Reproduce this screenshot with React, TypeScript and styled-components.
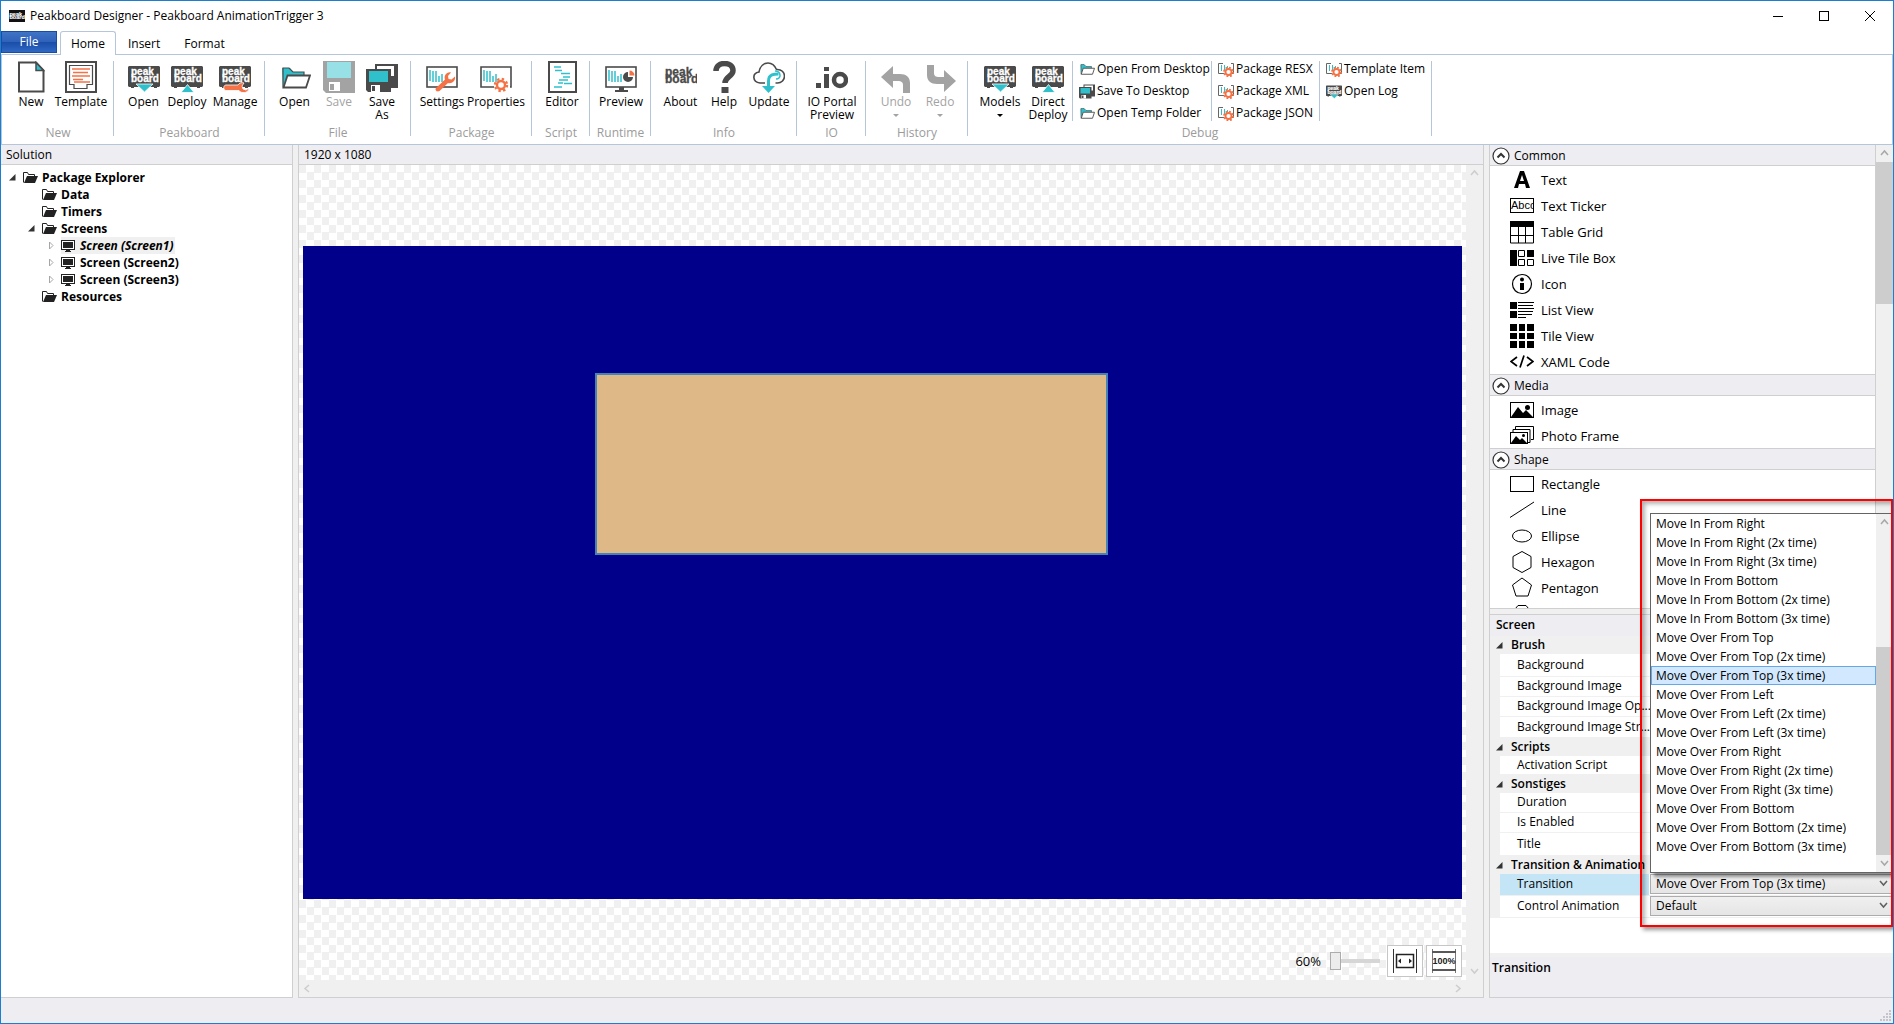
import React, { useState } from 'react';
import styled, { createGlobalStyle, css } from 'styled-components';

const c = {
  accent: '#1a7fd0',
  line: '#b6c6da',
  panel: '#eeedf2',
  grey: '#f0f0f0',
  border: '#cfcfcf',
  dark: '#4a4a4a',
  teal: '#30c0cc',
  orange: '#f47245',
  mute: '#a3a3a3',
};

const GlobalStyle = createGlobalStyle`
  * { box-sizing: border-box; }
  body { margin: 0; font-family: "Open Sans", "Noto Sans", sans-serif; font-size: 12px; line-height: 16px; color: #000; }
  button, select, input { font: inherit; color: inherit; }
  button { background: none; border: 0; padding: 0; }
  ul { list-style: none; margin: 0; padding: 0; }
  h1, h2, h3 { margin: 0; font: inherit; }
  svg { display: block; flex: none; }
`;

/* ---------- window frame ---------- */

const Window = styled.div`
  min-height: 100vh;
  display: flex;
  flex-direction: column;
  border: 1px solid ${c.accent};
  background: ${c.grey};
  overflow: hidden;
`;

const TitleBar = styled.header`
  display: flex;
  align-items: center;
  height: 30px;
  padding-left: 8px;
  background: #fff;
`;

const Title = styled.h1`
  flex: 1;
  margin-left: 5px;
  font-size: 12px;
`;

const WindowButton = styled.button`
  display: flex;
  align-items: center;
  justify-content: center;
  width: 46px;
  height: 28px;
`;

const TabStrip = styled.nav`
  display: flex;
  align-items: flex-end;
  height: 24px;
  background: #fff;
  border-bottom: 1px solid ${c.line};
`;

const FileTab = styled.button`
  width: 56px;
  height: 22px;
  margin: 0 3px 1px 0;
  color: #fff;
  border: 1px solid #1a4ba5;
  background: linear-gradient(#4074c6 0%, #2f62b9 48%, #1a4ea9 52%, #2f68c4 100%);
`;

const Tab = styled.button<{ $active?: boolean }>`
  height: 24px;
  padding: 0 11px;
  margin-bottom: -1px;
  border: 1px solid transparent;
  border-bottom: 0;
  ${(p) =>
    p.$active &&
    css`
      background: #fff;
      border-color: ${c.line};
      border-radius: 3px 3px 0 0;
      padding: 0 10px;
    `}
`;

/* ---------- ribbon ---------- */

const Ribbon = styled.div`
  display: flex;
  height: 90px;
  padding-top: 6px;
  background: #fff;
  border: 1px solid ${c.line};
  border-top: 0;
`;

const Group = styled.section<{ $w: number }>`
  display: flex;
  flex-direction: column;
  flex: none;
  width: ${(p) => p.$w}px;
  height: 79px;
  background: linear-gradient(${c.line}, ${c.line}) right top / 1px 75px no-repeat;
`;

const GroupItems = styled.div`
  display: flex;
  flex: 1;
  padding-left: 8px;
`;

const GroupName = styled.h2`
  height: 14px;
  line-height: 14px;
  text-align: center;
  color: #9b9b9b;
`;

const BigButton = styled.button<{ $w: number }>`
  display: flex;
  flex-direction: column;
  align-items: center;
  flex: none;
  width: ${(p) => p.$w}px;
  line-height: 13px;
  white-space: nowrap;
  &:disabled {
    color: ${c.mute};
  }
`;

const BigLabel = styled.span`
  margin-top: 2px;
  white-space: pre-line;
  text-align: center;
`;

const Caret = styled.span`
  margin-top: 6px;
  border: 3px solid transparent;
  border-top-color: currentColor;
  border-bottom: 0;
`;

const SmallColumn = styled.div<{ $w: number }>`
  width: ${(p) => p.$w}px;
  height: 60px;
  padding-left: 6px;
  border-left: 1px solid ${c.line};
`;

const SmallButton = styled.button`
  display: flex;
  align-items: center;
  gap: 2px;
  height: 22px;
  padding-bottom: 6px;
  white-space: nowrap;
`;

/* ---------- work area ---------- */

const Work = styled.main`
  display: flex;
  flex: 1;
  gap: 5px;
`;

const Panel = styled.section`
  display: flex;
  flex-direction: column;
  border-right: 1px solid ${c.border};
  border-bottom: 1px solid ${c.border};
`;

const SolutionPanel = styled(Panel)`
  width: 292px;
  background: #fff;
`;

const CanvasPanel = styled(Panel)`
  flex: 1;
  border-left: 1px solid ${c.border};
`;

const PanelHeader = styled.h2`
  height: 20px;
  padding-left: 5px;
  line-height: 20px;
  background: ${c.panel};
  border-bottom: 1px solid ${c.border};
`;

const Tree = styled.ul`
  padding: 4px 0 0 8px;
  font-weight: 700;
`;

const TreeRow = styled.li<{ $level: number }>`
  display: flex;
  align-items: center;
  height: 17px;
  padding-left: ${(p) => p.$level * 19}px;
`;

const TreeArrow = styled.span`
  display: flex;
  width: 14px;
`;

const TreeLabel = styled.span<{ $selected?: boolean }>`
  display: flex;
  align-items: center;
  gap: 4px;
  height: 17px;
  padding-right: 1px;
  background: ${(p) => (p.$selected ? c.grey : 'transparent')};
  font-style: ${(p) => (p.$selected ? 'italic' : 'normal')};
`;

const CanvasGrid = styled.div`
  display: grid;
  flex: 1;
  grid-template-columns: 1fr 17px;
  grid-template-rows: 1fr 17px;
`;

const Checker = styled.div`
  position: relative;
  display: flex;
  align-items: center;
  padding: 0 4px;
  background: repeating-conic-gradient(#fff 0 25%, #f0f0f0 0 50%) 0 0 / 15px 15px;
`;

const Stage = styled.div`
  position: relative;
  width: 100%;
  aspect-ratio: 1920 / 1082;
  background: #00008b;
`;

const Shape = styled.div`
  position: absolute;
  left: 25.2%;
  top: 19.5%;
  width: 44.3%;
  height: 27.8%;
  background: #deb887;
  border: 2px solid #4682b4;
`;

const ZoomBar = styled.div`
  position: absolute;
  right: 4px;
  bottom: 3px;
  display: flex;
  align-items: center;
  gap: 3px;
`;

const ZoomLabel = styled.label`
  margin-right: 6px;
  font-size: 13px;
`;

const ZoomSlider = styled.input`
  width: 50px;
  height: 18px;
  margin: 0 4px 0 0;
  appearance: none;
  background: linear-gradient(#d6d6d6, #d6d6d6) center / 100% 4px no-repeat;
  &::-webkit-slider-thumb {
    appearance: none;
    width: 11px;
    height: 18px;
    background: #ececec;
    border: 1px solid #acacac;
  }
`;

const ZoomButton = styled.button`
  display: flex;
  align-items: center;
  justify-content: center;
  width: 36px;
  height: 32px;
  background: #fff;
  border: 1px solid #c6c6c6;
`;

const VScroll = styled.div`
  display: flex;
  flex-direction: column;
  justify-content: space-between;
  align-items: center;
  padding: 4px 0;
  background: ${c.grey};
`;

const HScroll = styled.div`
  display: flex;
  justify-content: space-between;
  align-items: center;
  padding: 0 4px;
  background: ${c.grey};
`;

/* ---------- right side ---------- */

const Side = styled.aside`
  display: flex;
  flex-direction: column;
  width: 404px;
  gap: 5px;
  border-left: 1px solid ${c.border};
  border-bottom: 1px solid ${c.border};
`;

const Toolbox = styled.section`
  display: flex;
  height: 464px;
  border-bottom: 1px solid ${c.border};
  background: #fff;
`;

const ToolList = styled.div`
  flex: 1;
  overflow: hidden;
  border-right: 1px solid ${c.border};
`;

const ToolHeader = styled.button`
  display: flex;
  align-items: center;
  gap: 4px;
  width: 100%;
  height: 22px;
  padding: 2px 0 0 2px;
  background: ${c.panel};
  border: solid ${c.border};
  border-width: 1px 0;
  &:first-child {
    height: 21px;
    border-top: 0;
  }
`;

const Tool = styled.li`
  display: flex;
  align-items: center;
  gap: 7px;
  height: 26px;
  padding: 2px 0 0 20px;
  font-size: 13px;
`;

const ScrollTrack = styled.div`
  display: flex;
  flex-direction: column;
  align-items: center;
  width: 17px;
  background: ${c.grey};
`;

const ScrollArrow = styled.button`
  display: flex;
  align-items: center;
  justify-content: center;
  flex: none;
  width: 17px;
  height: 17px;
`;

const ScrollThumb = styled.div<{ $h: number; $top?: number }>`
  width: 17px;
  height: ${(p) => p.$h}px;
  margin-top: ${(p) => p.$top ?? 0}px;
  background: #cdcdcd;
`;

const Properties = styled.section`
  position: relative;
  display: flex;
  flex-direction: column;
  flex: 1;
  background: #fff;
  border-top: 1px solid ${c.border};
`;

const PropertiesTitle = styled.h2`
  height: 21px;
  padding-left: 6px;
  line-height: 20px;
  font-weight: 600;
  background: ${c.panel};
`;

const Category = styled.h3`
  display: flex;
  align-items: center;
  height: 18px;
  padding-left: 6px;
  gap: 8px;
  font-weight: 600;
  background: ${c.grey};
`;

const PropertyRow = styled.div<{ $h: number; $active?: boolean }>`
  display: grid;
  grid-template-columns: 149px 1fr;
  height: ${(p) => p.$h}px;
  border-left: 10px solid ${c.grey};
  border-bottom: 1px solid ${c.grey};
  > label,
  > span {
    align-self: stretch;
    display: flex;
    align-items: center;
    padding: 0 0 1px 17px;
    white-space: nowrap;
    background: ${(p) => (p.$active ? '#c3e5f6' : '#fff')};
  }
`;

const Value = styled.div`
  position: relative;
  margin-left: 1px;
`;

const Combo = styled.select`
  width: 100%;
  height: 20px;
  padding: 0 5px;
  appearance: none;
  border: 1px solid #acacac;
  border-right: 0;
  border-radius: 0;
  background: linear-gradient(#f0f0f0, #e5e5e5);
`;

const ComboChevron = styled.span`
  position: absolute;
  right: 5px;
  top: 5px;
  pointer-events: none;
`;

const Popup = styled.div`
  position: absolute;
  z-index: 2;
  left: 0;
  right: 0;
  bottom: calc(100% + 1px);
  display: flex;
  height: 360px;
  background: #fff;
  border: 1px solid #646464;
  border-right: 0;
  box-shadow: 4px 4px 3px rgba(0, 0, 0, 0.4);
`;

const Options = styled.ul`
  flex: 1;
`;

const Option = styled.li<{ $on: boolean }>`
  height: 19px;
  padding-left: 4px;
  line-height: 17px;
  border: 1px solid ${(p) => (p.$on ? '#66a7e8' : 'transparent')};
  background: ${(p) => (p.$on ? '#d1e8ff' : 'transparent')};
`;

const Callout = styled.div`
  position: absolute;
  z-index: 3;
  top: -116px;
  left: 150px;
  right: 0;
  height: 428px;
  border: 2px solid #f00;
  box-shadow: 3px 3px 4px rgba(0, 0, 0, 0.4), inset 3px 3px 4px rgba(0, 0, 0, 0.3);
  pointer-events: none;
`;

const Description = styled.div`
  height: 44px;
  margin-top: auto;
  padding: 3px 2px;
  font-weight: 600;
  background: ${c.panel};
  border-top: 4px solid ${c.grey};
`;

const StatusBar = styled.footer`
  display: flex;
  align-items: flex-end;
  justify-content: flex-end;
  height: 25px;
  padding: 0 2px 2px 0;
  background: ${c.panel};
`;

/* ---------- icons ---------- */

const Svg = ({ children, s = 32 }: { children: React.ReactNode; s?: number }) => (
  <svg width={s} height={s} viewBox="0 0 32 32" fill="none" aria-hidden="true">
    {children}
  </svg>
);

const LogoText = ({ fill, x = 3, y = 13, size = 10 }: { fill: string; x?: number; y?: number; size?: number }) => (
  <text fill={fill} stroke={fill} strokeWidth=".3" fontFamily="Liberation Sans, sans-serif" fontWeight="700" fontSize={size}>
    <tspan x={x} y={y}>peak</tspan>
    <tspan x={x} y={y + 7}>board</tspan>
  </text>
);

const Board = ({ mark, s }: { mark: 'down' | 'up' | 'wrench'; s?: number }) => (
  <Svg s={s}>
    <path d="M1 5h30l1 1v19l-1 1h-2v1h-3v-1H6v1H3v-1H1l-1-1V6z" fill={c.dark} />
    <LogoText fill="#fff" y={14} />
    {mark === 'down' && <path d="M8 23h17l-8.500 8z" fill={c.teal} stroke="#fff" strokeWidth=".8" />}
    {mark === 'up' && <path d="M10 31.500l6.500-8 6.500 8z" fill={c.teal} stroke="#fff" strokeWidth=".8" />}
    {mark === 'wrench' && (
      <path
        d="M7 24h12c1-2 4-3 6-2l-2 3 1 3 3 1 3-2c0 3-3 5-6 4.500-2 0-3-.8-4-2H7c-3 0-3-5.500 0-5.500z"
        fill={c.orange}
        stroke="#fff"
        strokeWidth=".8"
      />
    )}
  </Svg>
);

const NewIcon = () => (
  <Svg>
    <path d="M4 1.500h17l7.500 8v21H4z" stroke={c.dark} strokeWidth="2" />
    <path d="M21 1.500v8h7.500z" fill={c.teal} stroke={c.dark} strokeWidth="1.500" />
  </Svg>
);

const TemplateIcon = () => (
  <Svg>
    <rect x="1" y="1" width="30" height="30" stroke={c.dark} strokeWidth="2" />
    <path d="M4.500 23.500V4.500h23v19H22v4H9v-4z" stroke={c.dark} strokeWidth="1.200" />
    <path d="M7 8h18M8 11.500h15M7 15h18M8 18.500h10M9 21h16" stroke={c.orange} strokeWidth="1.400" />
  </Svg>
);

const FolderIcon = ({ s }: { s?: number }) => (
  <Svg s={s}>
    <path d="M3 7h8l3 4h11v4H9L4 26z" fill={c.teal} />
    <path d="M4 26.500V7h6l4 4h11v3.500" stroke={c.dark} strokeWidth="1.200" />
    <path d="M8.500 14.500h22.500l-4 12H4.500z" fill="#fff" stroke={c.dark} strokeWidth="1.800" />
  </Svg>
);

const SaveIcon = () => (
  <Svg>
    <path d="M0 0h32v32H3l-3-3z" fill={c.mute} />
    <path d="M4 1h24v16H4z" fill="#97e0e6" />
    <path d="M6 21h11v9H6z" fill="#fff" />
    <path d="M7 23h4v6H7z" fill={c.mute} />
  </Svg>
);

const SaveAsIcon = ({ s }: { s?: number }) => (
  <Svg s={s}>
    <path d="M9 3h23v24h-9V8H9z" fill={c.dark} />
    <path d="M11 5h17v10h-5V8H11z" fill="#fff" />
    <path d="M0 8h25v23H2l-2-2z" fill={c.dark} />
    <path d="M3 10h19v11H3z" fill={c.teal} />
    <path d="M5 24h9v7H5z" fill="#fff" />
    <path d="M6 25h3v5H6z" fill={c.dark} />
  </Svg>
);

const Bars = () => (
  <path d="M4 9v11M7 10v11M10 10v11M13 15v6M16 13v8" stroke={c.teal} strokeWidth="1.500" />
);

const SettingsIcon = () => (
  <Svg>
    <rect x="1" y="6" width="30" height="20" stroke={c.dark} strokeWidth="1.600" />
    <Bars />
    <path
      d="M10 27l9-8.500c-1.500-3.500 1.500-8 6-7l-3 3.500.5 3 3 .5 3.500-3c1 4-3 7.500-7 6.500l-8.500 8c-2.500 1.500-5-1-3.500-3z"
      fill={c.orange}
    />
  </Svg>
);

const Gear = ({ cx, cy, r }: { cx: number; cy: number; r: number }) => (
  <g stroke={c.orange} fill="none">
    <circle cx={cx} cy={cy} r={r} fill="#fff" strokeWidth={r * 0.6} />
    <circle cx={cx} cy={cy} r={r * 1.5} strokeWidth={r * 0.6} strokeDasharray={`${r * 0.589} ${r * 0.589}`} />
  </g>
);

const PropertiesIcon = () => (
  <Svg>
    <path d="M14 26H1V6h30v20h-1" stroke={c.dark} strokeWidth="1.600" />
    <Bars />
    <Gear cx={21} cy={24} r={4} />
  </Svg>
);

const PackageIcon = () => (
  <svg width="16" height="16" viewBox="0 0 16 16" fill="none" aria-hidden="true">
    <path d="M3 2.500H.5v10H6M13 2.500h2.500v10H14M3 2.500h2" stroke="#666" />
    <path d="M3.500 4v6M6.500 4v6M9.500 5v2" stroke={c.teal} />
    <Gear cx={10.5} cy={11} r={3} />
  </svg>
);

const EditorIcon = () => (
  <Svg>
    <rect x="3" y="1" width="27" height="30" stroke={c.dark} strokeWidth="2" />
    <path d="M8 6h7M9 9.500h7M15 12.500h9M17 16h7M13 19h9M12 22h5M18 22.500h8M8 26h8" stroke={c.teal} strokeWidth="1.700" />
  </Svg>
);

const PreviewIcon = () => (
  <Svg>
    <rect x="1" y="6" width="30" height="20" stroke={c.dark} strokeWidth="1.600" />
    <path d="M14 26h5v3h4v2H10v-2h4z" fill={c.dark} />
    <Bars />
    <path d="M23 11a5 5 0 1 0 5 5h-5z" fill={c.dark} />
    <path d="M24.500 9.500v5h5a5 5 0 0 0-5-5z" fill={c.orange} />
  </Svg>
);

const AboutIcon = () => (
  <Svg>
    <LogoText fill={c.dark} x={0} y={15} size={12} />
  </Svg>
);

const HelpIcon = () => (
  <Svg>
    <path d="M8 10c0-5 4-7.500 8.500-7.500S25 5 25 9.500c0 6-8 6-8 12.500" stroke={c.dark} strokeWidth="5.500" />
    <path d="M13.500 26h7v6h-7z" fill={c.dark} />
  </Svg>
);

const UpdateIcon = () => (
  <Svg>
    <path
      d="M12 22H7c-8-1-8-10-1-11C7 5 11 2 15 2c5 0 7 3 8.500 6.500 5-.5 8 3 8 6.500 0 4-3 7-7 7h-2"
      stroke={c.dark}
      strokeWidth="1.600"
    />
    <path d="M15.500 25v-5c0-7 6-7 10-7" stroke={c.teal} strokeWidth="3" />
    <path d="M22 10c6 0 7 8 1 8" stroke={c.teal} strokeWidth="1.500" />
    <path d="M9 25h13l-6.500 7z" fill={c.teal} />
  </Svg>
);

const IoIcon = () => (
  <Svg>
    <path d="M0 22h5v5H0zM8 13h5v14H8zM8 6h5v4H8z" fill={c.dark} />
    <circle cx="24" cy="19" r="6" stroke={c.dark} strokeWidth="4.500" />
  </Svg>
);

const UndoIcon = ({ flip }: { flip?: boolean }) => (
  <Svg>
    <path
      transform={flip ? 'matrix(-1 0 0 -1 33 36)' : undefined}
      d="M1 16L13 5v8h7c6 0 10 3 10 9v10h-7v-8c0-3-2-4-5-4h-5v7z"
      fill={c.mute}
    />
  </Svg>
);

const Chevron = ({ dir, color = '#a8a8a8' }: { dir: 'up' | 'down' | 'left' | 'right'; color?: string }) => {
  const d = { up: 'M1 6l3.500-4L8 6', down: 'M1 2l3.500 4L8 2', left: 'M6 1L2 4.500 6 8', right: 'M3 1l4 3.500L3 8' }[dir];
  return (
    <svg width="9" height="9" viewBox="0 0 9 9" fill="none" aria-hidden="true">
      <path d={d} stroke={color} strokeWidth="1.500" />
    </svg>
  );
};

const CollapseIcon = () => (
  <svg width="18" height="18" viewBox="0 0 18 18" fill="none" aria-hidden="true">
    <circle cx="9" cy="9" r="8" fill="#fff" stroke="#333" strokeWidth="1.200" />
    <path d="M5.500 10.500L9 7l3.500 3.500" stroke="#333" strokeWidth="2" />
  </svg>
);

const ExpandedArrow = () => (
  <svg width="7" height="7" viewBox="0 0 7 7" aria-hidden="true">
    <path d="M6.500 0v6.500H0z" fill="#333" />
  </svg>
);

const ClosedArrow = () => (
  <svg width="12" height="9" viewBox="0 0 12 9" aria-hidden="true">
    <path d="M2.500 1v7l3.500-3.500z" fill="none" stroke="#a6a6a6" />
  </svg>
);

const TreeFolder = () => (
  <svg width="15" height="13" viewBox="0 0 15 13" aria-hidden="true">
    <path d="M.5 11.500V1.500h4l1 2h6v1.500" fill="none" stroke="#222" />
    <path d="M4 5h11l-3 7H1z" fill="#222" />
  </svg>
);

const TreeMonitor = () => (
  <svg width="15" height="12" viewBox="0 0 15 12" aria-hidden="true">
    <rect x=".5" y=".5" width="13" height="9" fill="#fff" stroke="#222" />
    <path d="M2 2h10v6H2zM5 10h4v1H5zM4 11h6v1H4z" fill="#222" />
  </svg>
);

const k = { stroke: '#000', fill: 'none' };

const toolGlyphs: Record<string, React.ReactNode> = {
  Text: <path d="M4 20L10 3h4l6 17h-4l-1-4H9l-1 4zM10 13h4l-2-6z" fill="#000" fillRule="evenodd" />,
  'Text Ticker': (
    <>
      <rect x=".5" y="4.500" width="23" height="14" {...k} />
      <text x="1" y="15" fontSize="11" fontFamily="Liberation Sans, sans-serif">Abcc</text>
    </>
  ),
  'Table Grid': (
    <>
      <path d="M0 1h24v6H0z" />
      <path d="M.5 1v22h23V1M0 15.500h24M8.500 7v16M15.500 7v16" {...k} />
    </>
  ),
  'Live Tile Box': (
    <>
      <path d="M0 4h7v16H0zM17 4h7v7h-7z" />
      <path d="M8.500 4.500h6v6h-6zM8.500 13.500h6v6h-6zM17.500 13.500h6v6h-6z" {...k} />
    </>
  ),
  Icon: (
    <>
      <circle cx="12" cy="12" r="9.500" {...k} strokeWidth="1.200" />
      <circle cx="12" cy="7.500" r="2" />
      <path d="M10 11h4v7h-4z" />
    </>
  ),
  'List View': (
    <>
      <path d="M0 4h7v7H0zM0 13h7v7H0z" />
      <path d="M8 4.500h16M8 7.500h15M8 10.500h16M8 13.500h15M8 16.500h14M8 19.500h8" {...k} />
    </>
  ),
  'Tile View': <path d="M0 0h7v7H0zM9 0h6v7H9zM17 0h7v7h-7zM0 9h7v6H0zM9 9h6v6H9zM17 9h7v6h-7zM0 17h7v7H0zM9 17h6v7H9zM17 17h7v7h-7z" />,
  'XAML Code': <path d="M7 7L1 11.500 7 16M17 7l6 4.500-6 4.500M14 5.500l-4 12" {...k} strokeWidth="1.700" />,
  Image: (
    <>
      <rect x=".5" y="4.500" width="23" height="15" {...k} />
      <path d="M1 19l7-10 5 6 3-3 7 7z" />
      <circle cx="17.500" cy="9.500" r="2.500" />
    </>
  ),
  'Photo Frame': (
    <>
      <path d="M5.500 5V2.500h18v13H21M3 8V5.500h17v13h-2" {...k} />
      <rect x=".5" y="8.500" width="17" height="11" {...k} />
      <path d="M1 19l5-7 4 4 2-2 5 5z" />
      <circle cx="13.500" cy="11.500" r="1.500" />
    </>
  ),
  Rectangle: <rect x=".5" y="4.500" width="23" height="15" {...k} />,
  Line: <path d="M0 19.500L24 4" {...k} />,
  Ellipse: <ellipse cx="12" cy="12" rx="9.500" ry="6" {...k} />,
  Hexagon: <path d="M12 1.500l9 5v11l-9 5-9-5v-11z" {...k} />,
  Pentagon: <path d="M12 2l9.500 7-3.500 11H6L2.500 9z" {...k} />,
  Heptagon: <path d="M8 3.500h8l5 6v6l-5 5H8l-5-5v-6z" {...k} />,
};

/* ---------- data ---------- */

type Big = { label: string; w: number; icon: React.ReactNode; disabled?: boolean; caret?: boolean };

const groups: { name: string; w: number; items: Big[] }[] = [
  { name: 'New', w: 112, items: [
    { label: 'New', w: 42, icon: <NewIcon /> },
    { label: 'Template', w: 58, icon: <TemplateIcon /> },
  ] },
  { name: 'Peakboard', w: 151, items: [
    { label: 'Open', w: 43, icon: <Board mark="down" /> },
    { label: 'Deploy', w: 44, icon: <Board mark="up" /> },
    { label: 'Manage', w: 52, icon: <Board mark="wrench" /> },
  ] },
  { name: 'File', w: 146, items: [
    { label: 'Open', w: 43, icon: <FolderIcon /> },
    { label: 'Save', w: 46, icon: <SaveIcon />, disabled: true },
    { label: 'Save\nAs', w: 40, icon: <SaveAsIcon /> },
  ] },
  { name: 'Package', w: 121, items: [
    { label: 'Settings', w: 46, icon: <SettingsIcon /> },
    { label: 'Properties', w: 62, icon: <PropertiesIcon /> },
  ] },
  { name: 'Script', w: 58, items: [{ label: 'Editor', w: 44, icon: <EditorIcon /> }] },
  { name: 'Runtime', w: 61, items: [{ label: 'Preview', w: 46, icon: <PreviewIcon /> }] },
  { name: 'Info', w: 146, items: [
    { label: 'About', w: 43, icon: <AboutIcon /> },
    { label: 'Help', w: 44, icon: <HelpIcon /> },
    { label: 'Update', w: 46, icon: <UpdateIcon /> },
  ] },
  { name: 'IO', w: 69, items: [{ label: 'IO Portal\nPreview', w: 54, icon: <IoIcon /> }] },
  { name: 'History', w: 102, items: [
    { label: 'Undo', w: 44, icon: <UndoIcon />, disabled: true, caret: true },
    { label: 'Redo', w: 44, icon: <UndoIcon flip />, disabled: true, caret: true },
  ] },
  { name: 'Debug', w: 464, items: [
    { label: 'Models', w: 48, icon: <Board mark="down" />, caret: true },
    { label: 'Direct\nDeploy', w: 48, icon: <Board mark="up" /> },
  ] },
];

const debugColumns = [
  { w: 139, items: [
    { label: 'Open From Desktop', icon: <FolderIcon s={16} /> },
    { label: 'Save To Desktop', icon: <SaveAsIcon s={16} /> },
    { label: 'Open Temp Folder', icon: <FolderIcon s={16} /> },
  ] },
  { w: 108, items: [
    { label: 'Package RESX', icon: <PackageIcon /> },
    { label: 'Package XML', icon: <PackageIcon /> },
    { label: 'Package JSON', icon: <PackageIcon /> },
  ] },
  { w: 110, items: [
    { label: 'Template Item', icon: <PackageIcon /> },
    { label: 'Open Log', icon: <Board mark="down" s={16} /> },
  ] },
];

const tree = [
  { label: 'Package Explorer', level: 0, arrow: 'open' },
  { label: 'Data', level: 1 },
  { label: 'Timers', level: 1 },
  { label: 'Screens', level: 1, arrow: 'open' },
  { label: 'Screen (Screen1)', level: 2, arrow: 'closed', selected: true },
  { label: 'Screen (Screen2)', level: 2, arrow: 'closed' },
  { label: 'Screen (Screen3)', level: 2, arrow: 'closed' },
  { label: 'Resources', level: 1 },
];

const toolbox = [
  { name: 'Common', tools: ['Text', 'Text Ticker', 'Table Grid', 'Live Tile Box', 'Icon', 'List View', 'Tile View', 'XAML Code'] },
  { name: 'Media', tools: ['Image', 'Photo Frame'] },
  { name: 'Shape', tools: ['Rectangle', 'Line', 'Ellipse', 'Hexagon', 'Pentagon', 'Heptagon'] },
];

const times = ['', ' (2x time)', ' (3x time)'];
const transitions = ['Move In From Right', 'Move In From Bottom', 'Move Over From Top', 'Move Over From Left', 'Move Over From Right', 'Move Over From Bottom']
  .flatMap((name) => times.map((t) => name + t));

const categories = [
  { name: 'Brush', rows: [['Background', 23], ['Background Image', 20], ['Background Image Op...', 20], ['Background Image Str...', 21]] },
  { name: 'Scripts', rows: [['Activation Script', 19]] },
  { name: 'Sonstiges', rows: [['Duration', 20], ['Is Enabled', 20], ['Title', 23]] },
] as { name: string; rows: [string, number][] }[];

/* ---------- parts ---------- */

const RibbonBar = () => (
  <Ribbon>
    {groups.map((g) => (
      <Group key={g.name} $w={g.w}>
        <GroupItems>
          {g.items.map((b) => (
            <BigButton key={b.label} $w={b.w} disabled={b.disabled}>
              {b.icon}
              <BigLabel>{b.label}</BigLabel>
              {b.caret && <Caret />}
            </BigButton>
          ))}
          {g.name === 'Debug' &&
            debugColumns.map((col) => (
              <SmallColumn key={col.w} $w={col.w}>
                {col.items.map((b) => (
                  <SmallButton key={b.label}>
                    {b.icon}
                    {b.label}
                  </SmallButton>
                ))}
              </SmallColumn>
            ))}
        </GroupItems>
        <GroupName>{g.name}</GroupName>
      </Group>
    ))}
  </Ribbon>
);

const SolutionTree = () => (
  <SolutionPanel>
    <PanelHeader>Solution</PanelHeader>
    <Tree>
      {tree.map((n) => (
        <TreeRow key={n.label} $level={n.level}>
          <TreeArrow>
            {n.arrow === 'open' && <ExpandedArrow />}
            {n.arrow === 'closed' && <ClosedArrow />}
          </TreeArrow>
          <TreeLabel $selected={n.selected}>
            {n.level === 2 ? <TreeMonitor /> : <TreeFolder />}
            {n.label}
          </TreeLabel>
        </TreeRow>
      ))}
    </Tree>
  </SolutionPanel>
);

const CanvasArea = () => {
  const [zoom, setZoom] = useState(0);
  return (
    <CanvasPanel>
      <PanelHeader>1920 x 1080</PanelHeader>
      <CanvasGrid>
        <Checker>
          <Stage>
            <Shape />
          </Stage>
          <ZoomBar>
            <ZoomLabel htmlFor="zoom">60%</ZoomLabel>
            <ZoomSlider id="zoom" type="range" value={zoom} onChange={(e) => setZoom(Number(e.target.value))} />
            <ZoomButton aria-label="Fit to window">
              <svg width="24" height="24" viewBox="0 0 24 24" fill="none">
                <path d="M.5 0v24M23.500 0v24" stroke="#333" />
                <rect x="3.500" y="5.500" width="17" height="13" stroke="#222" strokeWidth="1.500" />
                <path d="M8 9.500v5l-3-2.500zM16 9.500v5l3-2.500z" fill="#222" />
              </svg>
            </ZoomButton>
            <ZoomButton aria-label="Actual size">
              <svg width="26" height="24" viewBox="0 0 26 24" fill="none">
                <path d="M1 3h24M1 21h24" stroke="#222" strokeWidth="1.600" />
                <path d="M1.500 0v24M24.500 0v24" stroke="#555" strokeWidth=".8" />
                <text x="13" y="15" textAnchor="middle" fontSize="9" fontWeight="700" fill="#222" fontFamily="Liberation Sans, sans-serif">100%</text>
              </svg>
            </ZoomButton>
          </ZoomBar>
        </Checker>
        <VScroll>
          <Chevron dir="up" color="#cdcdcd" />
          <Chevron dir="down" color="#cdcdcd" />
        </VScroll>
        <HScroll>
          <Chevron dir="left" color="#cdcdcd" />
          <Chevron dir="right" color="#cdcdcd" />
        </HScroll>
      </CanvasGrid>
    </CanvasPanel>
  );
};

const ToolboxPanel = () => (
  <Toolbox>
    <ToolList>
      {toolbox.map((s) => (
        <React.Fragment key={s.name}>
          <ToolHeader>
            <CollapseIcon />
            {s.name}
          </ToolHeader>
          <ul>
            {s.tools.map((t) => (
              <Tool key={t}>
                <svg width="24" height="24" viewBox="0 0 24 24" aria-hidden="true">{toolGlyphs[t]}</svg>
                {t !== 'Heptagon' && t}
              </Tool>
            ))}
          </ul>
        </React.Fragment>
      ))}
    </ToolList>
    <ScrollTrack>
      <ScrollArrow aria-label="Scroll up"><Chevron dir="up" /></ScrollArrow>
      <ScrollThumb $h={142} />
    </ScrollTrack>
  </Toolbox>
);

const PropertiesPanel = () => {
  const [transition, setTransition] = useState('Move Over From Top (3x time)');
  return (
    <Properties>
      <PropertiesTitle>Screen</PropertiesTitle>
      {categories.map((cat) => (
        <React.Fragment key={cat.name}>
          <Category><ExpandedArrow />{cat.name}</Category>
          {cat.rows.map(([label, h]) => (
            <PropertyRow key={label} $h={h}>
              <span>{label}</span>
            </PropertyRow>
          ))}
        </React.Fragment>
      ))}
      <Category><ExpandedArrow />Transition &amp; Animation</Category>
      <PropertyRow $h={22} $active>
        <label htmlFor="transition">Transition</label>
        <Value>
          <Combo id="transition" value={transition} onChange={(e) => setTransition(e.target.value)}>
            {transitions.map((t) => <option key={t}>{t}</option>)}
          </Combo>
          <ComboChevron><Chevron dir="down" color="#606060" /></ComboChevron>
          <Popup>
            <Options role="listbox" aria-label="Transition">
              {transitions.map((t) => (
                <Option key={t} role="option" aria-selected={t === transition} $on={t === transition} onClick={() => setTransition(t)}>
                  {t}
                </Option>
              ))}
            </Options>
            <ScrollTrack>
              <ScrollArrow aria-label="Scroll up"><Chevron dir="up" /></ScrollArrow>
              <ScrollThumb $h={208} $top={116} />
              <ScrollArrow aria-label="Scroll down"><Chevron dir="down" /></ScrollArrow>
            </ScrollTrack>
          </Popup>
        </Value>
      </PropertyRow>
      <PropertyRow $h={22}>
        <label htmlFor="animation">Control Animation</label>
        <Value>
          <Combo id="animation"><option>Default</option></Combo>
          <ComboChevron><Chevron dir="down" color="#606060" /></ComboChevron>
        </Value>
      </PropertyRow>
      <Description>Transition</Description>
      <Callout />
    </Properties>
  );
};

export default function App() {
  return (
    <Window>
      <GlobalStyle />
      <TitleBar>
        <svg width="16" height="12" viewBox="0 0 32 24" aria-hidden="true">
          <path d="M0 0h32v24H0z" fill="#111" />
          <LogoText fill="#fff" x={1} y={11} size={11} />
        </svg>
        <Title>Peakboard Designer - Peakboard AnimationTrigger 3</Title>
        <WindowButton aria-label="Minimize">
          <svg width="10" height="10" viewBox="0 0 10 10"><path d="M0 5.500h10" stroke="#000" /></svg>
        </WindowButton>
        <WindowButton aria-label="Maximize">
          <svg width="10" height="10" viewBox="0 0 10 10"><rect x=".5" y=".5" width="9" height="9" fill="none" stroke="#000" /></svg>
        </WindowButton>
        <WindowButton aria-label="Close">
          <svg width="10" height="10" viewBox="0 0 10 10"><path d="M0 0l10 10M10 0L0 10" stroke="#000" /></svg>
        </WindowButton>
      </TitleBar>
      <TabStrip>
        <FileTab>File</FileTab>
        <Tab $active>Home</Tab>
        <Tab>Insert</Tab>
        <Tab>Format</Tab>
      </TabStrip>
      <RibbonBar />
      <Work>
        <SolutionTree />
        <CanvasArea />
        <Side>
          <ToolboxPanel />
          <PropertiesPanel />
        </Side>
      </Work>
      <StatusBar>
        <svg width="11" height="11" viewBox="0 0 11 11" aria-hidden="true">
          <path d="M9 0h2v2H9zM6 3h2v2H6zM9 3h2v2H9zM3 6h2v2H3zM6 6h2v2H6zM9 6h2v2H9zM0 9h2v2H0zM3 9h2v2H3zM6 9h2v2H6zM9 9h2v2H9z" fill="#c4c4cc" />
        </svg>
      </StatusBar>
    </Window>
  );
}
